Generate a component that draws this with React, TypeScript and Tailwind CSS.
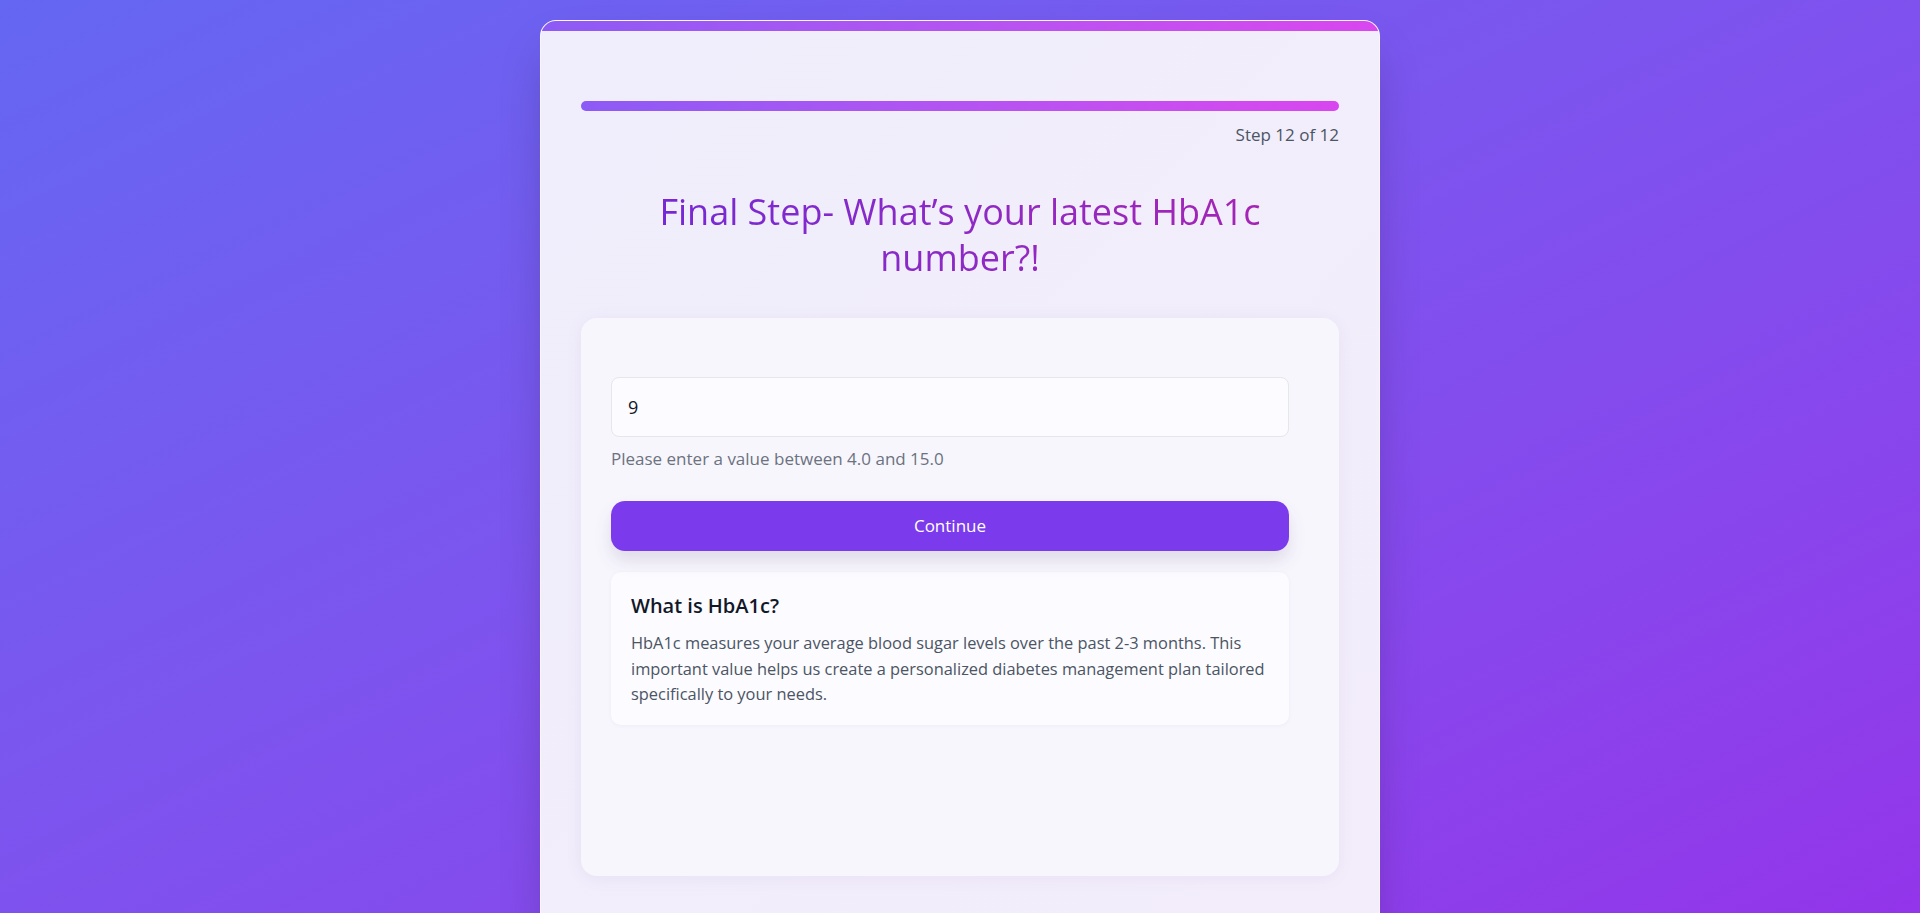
const App = () => {
  return (
    <div className="min-h-screen bg-linear-to-br from-[#6467f2] to-[#9334ea] pt-5 font-['Segoe_UI','Open_Sans',sans-serif]">
      <div className="mx-auto w-[840px] overflow-hidden rounded-2xl border border-white/60 bg-linear-to-br from-[#f0eefc] to-[#f3edfb] shadow-2xl">
        <div className="h-[10px] bg-linear-to-r from-[#8d5af5] to-[#d946ef]" />

        <div className="px-10 pt-[70px] pb-14">
          <div className="h-2.5 w-full rounded-full bg-linear-to-r from-[#8d5af5] to-[#d946ef]" />
          <p className="mt-3 text-right text-[17px] leading-6 text-[#4b5563]">Step 12 of 12</p>

          <h1 className="mt-[42px] bg-linear-to-r from-[#7026d8] to-[#aa20b0] bg-clip-text text-center text-4xl leading-[46px] text-transparent">
            Final Step- What’s your latest HbA1c
            <br />
            number?!
          </h1>

          <div className="mt-[37px] h-[558px] rounded-2xl bg-[#f8f6fd] pt-[59px] pr-[50px] pl-[30px] shadow-[0_2px_18px_rgba(60,40,120,0.06)]">
            <input
              type="text"
              defaultValue="9"
              className="h-[60px] w-full rounded-lg border border-[#e5e7eb] bg-[#fcfbff] px-4 text-lg text-[#111827] outline-none"
            />
            <p className="mt-2.5 text-[17px] leading-6 text-[#6b7280]">
              Please enter a value between 4.0 and 15.0
            </p>

            <button className="mt-[30px] h-[50px] w-full rounded-[14px] bg-[#7c3aed] text-[17px] text-white shadow-[0_10px_18px_rgba(40,30,80,0.12)]">
              Continue
            </button>

            <div className="mt-[21px] rounded-[10px] bg-[#fcfbff] px-5 pt-5 pb-[18px] shadow-[0_1px_4px_rgba(40,30,80,0.05)]">
              <h3 className="text-xl leading-7 font-semibold text-[#111827]">What is HbA1c?</h3>
              <p className="mt-2.5 text-[16.4px] leading-[25.6px] text-[#4b5563]">
                HbA1c measures your average blood sugar levels over the past 2-3 months. This
                important value helps us create a personalized diabetes management plan tailored
                specifically to your needs.
              </p>
            </div>
          </div>
        </div>
      </div>
    </div>
  );
};

export default App;
